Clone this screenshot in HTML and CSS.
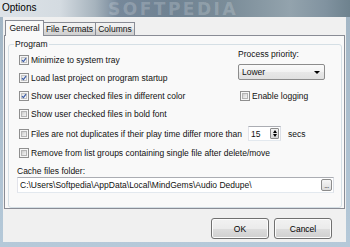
FILE: index.html
```html
<!DOCTYPE html>
<html>
<head>
<meta charset="utf-8">
<title>Options</title>
<link rel="stylesheet" href="styles.css">
</head>
<body>
<div class="window">
  <div class="titlebar">
    <span class="title">Options</span>
    <span class="watermark">SOFTPEDIA</span>
  </div>
  <div class="frame">
    <div class="client">
      <div class="tabs">
        <div class="tab active tab-general">General</div>
        <div class="tab tab-formats">File Formats</div>
        <div class="tab tab-columns">Columns</div>
      </div>
      <div class="panel">
        <fieldset class="group">
          <legend>Program</legend>
          <div class="top">
            <div class="left">
              <div class="row"><span class="cb checked"><svg viewBox="0 0 8 8" width="8" height="8"><path d="M1.3 4.1 L3.2 6.2 L6.7 1.4" fill="none" stroke="#3d5ea8" stroke-width="1.6"/></svg></span>Minimize to system tray</div>
              <div class="row"><span class="cb checked"><svg viewBox="0 0 8 8" width="8" height="8"><path d="M1.3 4.1 L3.2 6.2 L6.7 1.4" fill="none" stroke="#3d5ea8" stroke-width="1.6"/></svg></span>Load last project on program startup</div>
              <div class="row"><span class="cb checked"><svg viewBox="0 0 8 8" width="8" height="8"><path d="M1.3 4.1 L3.2 6.2 L6.7 1.4" fill="none" stroke="#3d5ea8" stroke-width="1.6"/></svg></span>Show user checked files in different color</div>
              <div class="row"><span class="cb"></span>Show user checked files in bold font</div>
            </div>
            <div class="right">
              <div class="plabel">Process priority:</div>
              <div class="combo"><span class="combo-text">Lower</span><span class="arrow"></span></div>
              <div class="row logrow"><span class="cb"></span>Enable logging</div>
            </div>
          </div>
          <div class="row row-wide first-wide"><span class="cb"></span>Files are not duplicates if their play time differ more than
            <span class="spin"><span class="spin-text">15</span><span class="spin-btns"><span class="up"></span><span class="down"></span></span></span>
            <span class="secs">secs</span></div>
          <div class="row row-wide"><span class="cb"></span>Remove from list groups containing single file after delete/move</div>
          <div class="cache-label">Cache files folder:</div>
          <div class="edit"><span class="edit-text">C:\Users\Softpedia\AppData\Local\MindGems\Audio Dedupe\</span><span class="browse">...</span></div>
        </fieldset>
      </div>
      <div class="buttons">
        <button class="btn">OK</button>
        <button class="btn">Cancel</button>
      </div>
    </div>
  </div>
</div>
</body>
</html>
```
FILE: styles.css
```css
* { box-sizing: border-box; }
html, body { margin: 0; padding: 0; }
body {
  width: 350px;
  height: 247px;
  overflow: hidden;
  font-family: "Liberation Sans", Arial, sans-serif;
  font-size: 8.5px;
  color: #111;
  background: #a9bdcc;
}
.window {
  display: flex;
  flex-direction: column;
  height: 247px;
}
.titlebar {
  flex: none;
  height: 17px;
  position: relative;
  background: linear-gradient(90deg, #dde3e8 0, #d4dbe1 60px, #a6b3bd 95px, #76889a 118px, #6f8292 170px, #7b8d99 230px, #93a3ad 290px, #8193a0 325px, #6e828e 350px);
}
.title {
  position: relative;
  z-index: 1;
  display: block;
  padding-left: 2px;
  font-size: 10px;
  line-height: 16px;
  color: #000;
}
.watermark {
  position: absolute;
  left: 108px;
  top: 1px;
  font-family: "DejaVu Sans", sans-serif;
  font-weight: bold;
  font-size: 17px;
  line-height: 16px;
  letter-spacing: 2.5px;
  color: rgba(255, 255, 255, 0.2);
  white-space: nowrap;
}
.frame {
  flex: 1;
  display: flex;
  padding: 0 4px 5px 3px;
  background: linear-gradient(180deg, #a3b6c5 0, #b5c9d9 100%);
}
.client {
  flex: 1;
  display: flex;
  flex-direction: column;
  background: #f0f0f0;
  padding: 3px 1px 0 1px;
}
.tabs {
  display: flex;
  align-items: flex-end;
  height: 15px;
  padding-left: 1px;
  position: relative;
  z-index: 1;
}
.tab {
  height: 13px;
  line-height: 12px;
  text-align: center;
  border: 1px solid #898c95;
  border-bottom: none;
  border-left: none;
  background: linear-gradient(180deg, #f3f3f3 0, #ebebeb 50%, #dddddd 51%, #cfcfcf 100%);
  white-space: nowrap;
}
.tab.active {
  height: 16px;
  line-height: 14px;
  margin-bottom: -1px;
  border-left: 1px solid #898c95;
  background: #f9f9f9;
}
.tab-general { width: 39px; }
.tab-formats { width: 52px; }
.tab-columns { width: 39px; }
.panel {
  height: 174px;
  display: flex;
  flex-direction: column;
  border: 1px solid #898c95;
  background: #f9f9f9;
  padding: 0 2px 0 3px;
}
.group {
  flex: 1;
  min-width: 0;
  margin: 3px 0 0 0;
  border: 1px solid #d5dfe5;
  border-radius: 3px;
  padding: 0 7px 0 8px;
  display: flex;
  flex-direction: column;
}
.group legend {
  padding: 0 1px;
  margin-left: -3px;
  line-height: 10px;
}
.top {
  display: flex;
}
.left {
  width: 221px;
  padding-top: 2px;
}
.right {
  flex: 1;
  display: flex;
  flex-direction: column;
}
.row {
  height: 18px;
  display: flex;
  align-items: center;
  white-space: nowrap;
}
.row-wide { height: 19px; }
.first-wide { margin-top: 1px; }
.cb {
  flex: none;
  width: 10px;
  height: 10px;
  margin: 0 2px 0 2px;
  border: 1px solid #8f8f8f;
  background: #f6f6f6;
  padding: 1px;
  display: flex;
  align-items: center;
  justify-content: center;
  position: relative;
}
.cb::before {
  content: "";
  position: absolute;
  left: 1px;
  top: 1px;
  right: 1px;
  bottom: 1px;
  background: linear-gradient(135deg, #cbcbcb 0, #e6e6e6 60%, #f3f3f3 100%);
  border: 1px solid #b4b4b4;
}
.cb.checked::before {
  background: linear-gradient(135deg, #e2e2e2 0, #f4f4f4 70%, #fbfbfb 100%);
  border-color: #c4c4c4;
}
.cb svg {
  position: relative;
  display: block;
}
.plabel {
  line-height: 10px;
}
.combo {
  margin-top: 5px;
  width: 87px;
  height: 16px;
  border: 1px solid #8c8c8c;
  border-radius: 2px;
  background: linear-gradient(180deg, #fafafa 0, #f2f2f2 50%, #e8e8e8 51%, #e0e0e0 100%);
  display: flex;
  align-items: center;
  justify-content: space-between;
  padding: 0 4px 0 3px;
}
.arrow {
  width: 0;
  height: 0;
  border-left: 3px solid transparent;
  border-right: 3px solid transparent;
  border-top: 3px solid #000;
}
.logrow {
  margin-top: 7px;
}
.spin {
  flex: none;
  margin-left: 6px;
  width: 33px;
  height: 15px;
  border: 1px solid #abadb3;
  border-color: #abadb3 #dbdfe6 #e3e9ef #e2e3ea;
  background: #fff;
  display: flex;
  align-items: center;
  justify-content: space-between;
  padding: 0 1px 0 2px;
}
.spin-btns {
  width: 9px;
  height: 11px;
  display: flex;
  flex-direction: column;
  border: 1px solid #8c8c8c;
  border-radius: 1px;
  background: linear-gradient(180deg, #f2f2f2, #d6d6d6);
  align-items: center;
  justify-content: space-around;
}
.up, .down {
  width: 0;
  height: 0;
  border-left: 2.5px solid transparent;
  border-right: 2.5px solid transparent;
}
.up { border-bottom: 3px solid #000; }
.down { border-top: 3px solid #000; }
.secs {
  margin-left: 7px;
}
.cache-label {
  margin-top: 4px;
  line-height: 10px;
}
.edit {
  margin-top: 1px;
  height: 16px;
  border: 1px solid #abadb3;
  border-color: #abadb3 #dbdfe6 #e3e9ef #e2e3ea;
  background: #fff;
  display: flex;
  align-items: center;
  justify-content: space-between;
  padding: 0 1px 0 2px;
  white-space: nowrap;
}
.browse {
  width: 11px;
  height: 12px;
  border: 1px solid #8c8c8c;
  border-radius: 2px;
  background: linear-gradient(180deg, #f6f6f6, #dcdcdc);
  font-size: 7px;
  line-height: 12px;
  text-align: center;
  letter-spacing: -0.5px;
}
.buttons {
  display: flex;
  justify-content: flex-end;
  gap: 5px;
  margin-top: 9px;
  padding-right: 13px;
}
.btn {
  width: 58px;
  height: 21px;
  padding: 0;
  margin: 0;
  font: inherit;
  color: #000;
  border: 1px solid #707070;
  border-radius: 3px;
  background: linear-gradient(180deg, #f2f2f2 0, #ebebeb 50%, #dddddd 51%, #cfcfcf 100%);
  box-shadow: inset 0 0 0 1px #fcfcfc;
}
```
